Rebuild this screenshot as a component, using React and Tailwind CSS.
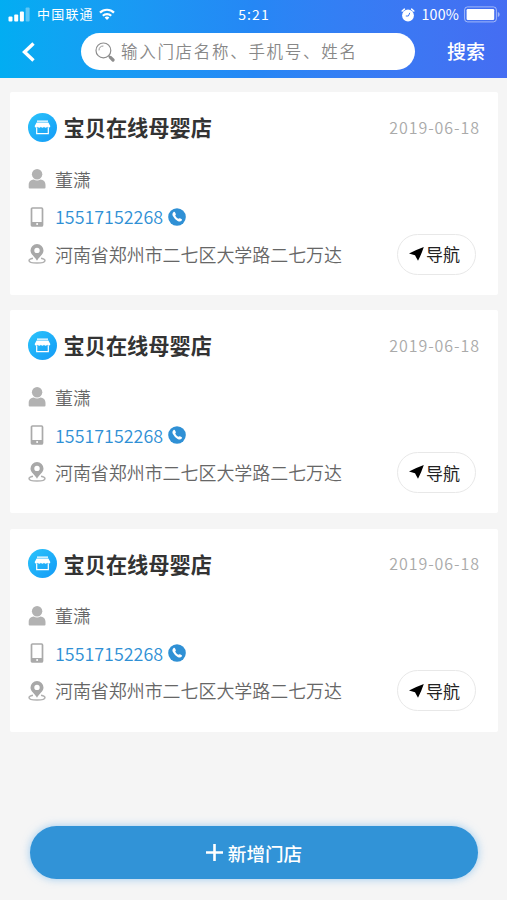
const stores = [
  {
    name: "宝贝在线母婴店",
    date: "2019-06-18",
    owner: "董潇",
    phone: "15517152268",
    address: "河南省郑州市二七区大学路二七万达"
  },
  {
    name: "宝贝在线母婴店",
    date: "2019-06-18",
    owner: "董潇",
    phone: "15517152268",
    address: "河南省郑州市二七区大学路二七万达"
  },
  {
    name: "宝贝在线母婴店",
    date: "2019-06-18",
    owner: "董潇",
    phone: "15517152268",
    address: "河南省郑州市二七区大学路二七万达"
  }
]

function SignalIcon() {
  return (
    <svg className="w-[22px] h-[15px]" viewBox="0 0 22 15" fill="#fff">
      <rect x="0.5" y="9.5" width="4" height="5" rx="1" />
      <rect x="6.2" y="7.5" width="4" height="7" rx="1" />
      <rect x="11.9" y="4.5" width="4" height="10" rx="1" />
      <rect x="17.6" y="0.5" width="4" height="14" rx="1" opacity="0.35" />
    </svg>
  )
}

function WifiIcon() {
  return (
    <svg className="w-4 h-3 mb-px" viewBox="0 0 16 12" fill="none" stroke="#fff" strokeWidth="2.2">
      <path d="M1 4.6a10 10 0 0 1 14 0" />
      <path d="M3.8 7.8a6 6 0 0 1 8.4 0" />
      <path d="M8 12 5.6 9.6a3.5 3.5 0 0 1 4.8 0Z" fill="#fff" stroke="none" />
    </svg>
  )
}

function AlarmIcon() {
  return (
    <svg className="w-[14px] h-[14px]" viewBox="0 0 14 14">
      <circle cx="7" cy="7.5" r="5.9" fill="#fff" />
      <path d="M1.2 3 3.4 1.2M12.8 3 10.6 1.2" stroke="#fff" strokeWidth="1.6" strokeLinecap="round" />
      <path d="M8.8 4.8 7.4 8H4.8" stroke="#3f78f2" strokeWidth="1" fill="none" />
    </svg>
  )
}

function BatteryIcon() {
  return (
    <svg className="w-[36px] h-[17px]" viewBox="0 0 36 17">
      <rect x="0.6" y="0.9" width="31.8" height="15" rx="3" fill="none" stroke="#fff" strokeOpacity="0.5" strokeWidth="1" />
      <rect x="2.6" y="3" width="27.6" height="11" rx="1.2" fill="#fff" />
      <path d="M33.8 6v5c1.4-.6 1.8-1.5 1.8-2.5S35.2 6.6 33.8 6Z" fill="#fff" fillOpacity="0.5" />
    </svg>
  )
}

function SearchIcon() {
  return (
    <svg className="w-5 h-5" viewBox="0 0 20 20" fill="none" stroke="#8d8d8d">
      <circle cx="8.4" cy="8.4" r="7.4" strokeWidth="1.2" />
      <path d="M4 8.4A4.5 4.5 0 0 1 8.4 4" strokeWidth="0.9" />
      <path d="m13.6 13.6 1.6 1.6" strokeWidth="1.5" />
      <path d="m15.4 15.4 2.6 2.6" strokeWidth="3.2" strokeLinecap="round" />
    </svg>
  )
}

function StoreIcon() {
  return (
    <span className="flex items-center justify-center w-[29px] h-[29px] rounded-full bg-linear-to-br from-[#2cc4fb] to-[#149af6]">
      <svg className="w-[17px] h-[15px]" viewBox="0 0 17 15">
        <path d="M3 0.5h11v1.3H3Z" fill="#fff" />
        <path d="M2.6 2.4h11.8L16.3 6c0 1.8-2.4 2.1-3.1.7-.7 1.4-2.5 1.4-3.2 0-.7 1.4-2.4 1.4-3.1 0-.7 1.4-2.5 1.4-3.2 0C3 8.100.7 7.8.7 6Z" fill="#fff" />
        <path d="M2.7 7.5v6.2h11.6V7.5" fill="none" stroke="#fff" strokeWidth="1.2" />
      </svg>
    </span>
  )
}

function UserIcon() {
  return (
    <svg className="w-[18px] h-5" viewBox="0 0 18 20" fill="#b2b2b2">
      <circle cx="9.1" cy="5.2" r="5.2" />
      <path d="M0.7 18.6v-2.5c0-3.4 2.2-5.3 5-5.5a6.6 6.6 0 0 0 6.8 0c2.8.2 5 2.1 5 5.5v2.5q0 1-1 1H1.7q-1 0-1-1Z" />
    </svg>
  )
}

function MobileIcon() {
  return (
    <svg className="w-[14px] h-5" viewBox="0 0 14 20">
      <rect x="1.5" y="1" width="11" height="18" rx="1" fill="none" stroke="#aaa" strokeWidth="1.7" />
      <path d="M1.5 15h11.2v4H1.5Z" fill="#aaa" />
      <circle cx="7.1" cy="16.9" r="1" fill="#fff" />
    </svg>
  )
}

function PinIcon() {
  return (
    <svg className="w-[18px] h-5" viewBox="0 0 18 20">
      <path d="M5 14.2c-2.5.5-4 1.3-4 2.2 0 1.5 3.5 2.6 8 2.6s8-1.1 8-2.6c0-.9-1.5-1.7-4-2.2" fill="none" stroke="#b0b0b0" strokeWidth="1.4" />
      <path fillRule="evenodd" d="M9 0a6.5 6.5 0 0 0-6.5 6.5c0 3.9 4.4 6.2 6.5 10.2 2.1-4 6.5-6.3 6.5-10.2A6.5 6.5 0 0 0 9 0Zm0 3.7a2.7 2.7 0 1 1 0 5.4 2.7 2.7 0 0 1 0-5.4Z" fill="#a8a8a8" />
    </svg>
  )
}

function CallIcon() {
  return (
    <svg className="w-[18px] h-[18px]" viewBox="0 0 18 18">
      <circle cx="9" cy="9" r="8.8" fill="#2f90d5" />
      <path d="M5.4 4.3c.7-.7 1.3-.5 1.7.3l.7 1.4c.2.5 0 .9-.6 1.5.7 1.5 1.7 2.5 3.3 3.3.6-.7 1-.8 1.5-.5l1.4.8c.7.4.8.9.2 1.6-.9 1-2.3 1.1-4 .2a11 11 0 0 1-4.7-4.8c-.8-1.6-.5-2.9.5-3.8Z" fill="#fff" />
    </svg>
  )
}

function StoreCard({ store }) {
  return (
    <div className="h-[203px] bg-white rounded-xs px-[18px] pt-5">
      <div className="flex items-center h-[30px]">
        <StoreIcon />
        <h2 className="ml-[6.5px] text-[21.2px] leading-[30px] font-bold text-[#333]">{store.name}</h2>
        <span className="ml-auto text-base tracking-[0.95px] leading-[22px] pb-px font-[350] text-[#aaa]">{store.date}</span>
      </div>

      <div className="flex items-center h-[38px] mt-[18px]">
        <div className="flex justify-center w-[18px] mr-[9px]"><UserIcon /></div>
        <span className="text-[18px] font-[350] text-[#666]">{store.owner}</span>
      </div>

      <div className="flex items-center h-[37px]">
        <div className="flex justify-center w-[18px] mr-[9px]"><MobileIcon /></div>
        <span className="text-[17.9px] font-[350] text-[#2f90d5] w-[108px] mr-[5px]">{store.phone}</span>
        <CallIcon />
      </div>

      <div className="flex items-center h-[38px]">
        <div className="flex justify-center w-[18px] mr-[9px]"><PinIcon /></div>
        <span className="text-[17.95px] font-[350] text-[#666]">{store.address}</span>
        <button className="flex items-center justify-center w-[79px] h-[41px] ml-auto mr-1 pr-[4px] rounded-full border border-[#e8e8e8] text-[17px] text-[#222]">
          <svg className="w-[15px] h-[14px] mr-[2px]" viewBox="0 0 15 14">
            <path d="M14.8 0Q8 2.4 0 6.6l6 1.6 3 5.6Q12.5 7 14.8 0Z" fill="#000" />
          </svg>
          导航
        </button>
      </div>
    </div>
  )
}

export default function App() {
  return (
    <div className="flex flex-col h-[900px] bg-[#f5f5f5] font-['Noto_Sans_CJK_SC',sans-serif] whitespace-nowrap">

      <header className="h-[78px] shrink-0 bg-linear-to-r from-[#02adf2] via-[#2587f5] to-[#456df2] text-white">

        {/* Status bar */}
        <div className="grid grid-cols-3 items-center h-[29px] pl-2 pr-[7px] text-[13px]">
          <div className="flex items-center">
            <SignalIcon />
            <span className="ml-[7px] mr-[5px] pb-px tracking-[1.2px]">中国联通</span>
            <WifiIcon />
          </div>
          <span className="text-center text-sm leading-5 pb-px tracking-[1.1px]">5:21</span>
          <div className="flex items-center justify-end">
            <AlarmIcon />
            <span className="ml-[7px] mr-[5px] text-[14.2px] leading-5 pb-px tracking-[0.2px]">100%</span>
            <BatteryIcon />
          </div>
        </div>

        {/* Search bar */}
        <div className="flex items-center h-[45px] px-[22px]">
          <svg className="w-[14px] h-5" viewBox="0 0 14 20" fill="none" stroke="#fff" strokeWidth="3.4">
            <path d="M11.5 1.5 2.5 10l9 8.5" />
          </svg>
          <div className="flex items-center w-[334px] h-[37px] ml-[45px] pl-[14px] rounded-full bg-white">
            <SearchIcon />
            <span className="ml-[6px] text-[16.5px] tracking-[1.7px] font-[350] text-[#888]">输入门店名称、手机号、姓名</span>
          </div>
          <span className="ml-auto text-[19px] font-medium">搜索</span>
        </div>
      </header>

      {/* Store list */}
      <main className="flex flex-col gap-[15.45px] pt-[14px] pl-[10px] pr-[9px]">
        {stores.map((store, index) => (
          <StoreCard key={index} store={store} />
        ))}
      </main>

      <button className="flex items-center justify-center h-[53px] mt-auto mb-[21px] ml-[30px] mr-[29px] rounded-full bg-[#3193d7] text-white text-[18.6px] font-medium shadow-[0_0_8px_rgba(80,165,235,0.55)]">
        <svg className="w-[17px] h-[17px] mr-[5px]" viewBox="0 0 17 17" stroke="#fff" strokeWidth="2.6">
          <path d="M8.5 0v17M0 8.5h17" />
        </svg>
        新增门店
      </button>
    </div>
  )
}
